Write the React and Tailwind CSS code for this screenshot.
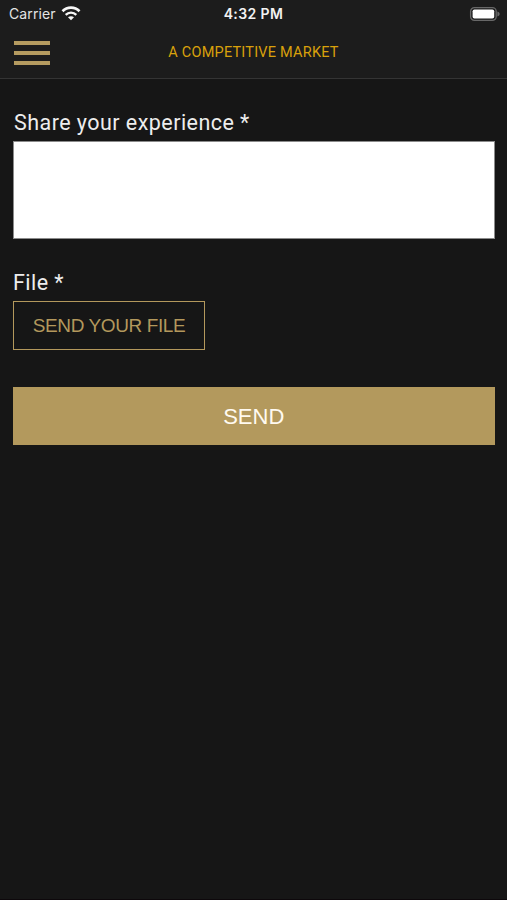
function WifiIcon() {
  return (
    <svg className="ml-[5px] h-[15px] w-[20px]" viewBox="0 0 20 15" fill="none" stroke="#f7f7f7">
      <path d="M1.5 5.3C6.2 .5 13.8 .5 18.5 5.3" strokeWidth="2.7" />
      <path d="M4.7 8.8C7.7 5.9 12.3 5.9 15.3 8.8" strokeWidth="2.4" />
      <path d="M10 14.3L7 11.3C8.7 9.8 11.3 9.8 13 11.3Z" fill="#f7f7f7" stroke="none" />
    </svg>
  );
}

function BatteryIcon() {
  return (
    <svg className="h-[16px] w-[32px]" viewBox="0 0 32 16">
      <rect x="1.6" y="1.6" width="25.6" height="12.8" rx="3.8" fill="none" stroke="#686868" strokeWidth="1.3" />
      <rect x="3.6" y="3.5" width="21.6" height="9" rx="1.8" fill="#fff" />
      <path d="M28.4 5.5C31.4 6.5 31.4 9.5 28.4 10.5Z" fill="#686868" />
    </svg>
  );
}

export default function App() {
  return (
    <div className="flex h-[900px] w-full flex-col border-b border-[#0d080b] bg-[#161616] font-['Roboto',sans-serif]">
      <header className="flex h-[79px] shrink-0 flex-col border-b border-[#343434] bg-[#1c1c1c]">
        <div className="grid h-[27px] grid-cols-3 items-center">
          <div className="flex items-center pl-[9px] text-[#e4e4e4]">
            <span className="font-['Inter'] text-[14px] leading-[27px] tracking-[0.12px]">Carrier</span>
            <WifiIcon />
          </div>
          <span className="text-center font-['Inter'] text-[14px] font-semibold leading-[27px] tracking-[0.4px] text-[#f2f2f2]">4:32 PM</span>
          <div className="flex justify-end pr-[6px]"><BatteryIcon /></div>
        </div>
        <div className="grid h-[51px] grid-cols-[50px_1fr_50px] items-center">
          <button aria-label="Menu" className="flex flex-col gap-[6px] pl-[14px]">
            <span className="h-[4px] w-[36px] bg-[#b59b60]" />
            <span className="h-[4px] w-[36px] bg-[#b59b60]" />
            <span className="h-[4px] w-[36px] bg-[#b59b60]" />
          </button>
          <h1 className="text-center text-[14.5px] leading-[20px] tracking-[0.22px] text-[#d9a10b]">A COMPETITIVE MARKET</h1>
        </div>
      </header>
      <main className="flex flex-col pl-[13px] pr-[12.5px] pt-[30px] text-[#ededed]">
        <label htmlFor="experience" className="h-[32px] pl-px text-[21.5px] leading-[28px] tracking-[0.45px]">Share your experience *</label>
        <textarea id="experience" className="block h-[98px] w-full resize-none border border-[#8b8b8b] bg-white outline-none" />
        <label className="mt-[30px] h-[32px] text-[21.5px] leading-[28px] tracking-[0.45px]">File *</label>
        <button className="h-[49px] w-[192px] border border-[#b3985c] font-['Liberation_Sans'] text-[19px] leading-[47px] tracking-[-0.4px] text-[#b3985c]">SEND YOUR FILE</button>
        <button className="mt-[37px] h-[58px] bg-[#b3995d] pt-px font-['Liberation_Sans'] text-[22px] leading-[57px] text-[#fffaf0]">SEND</button>
      </main>
    </div>
  );
}
